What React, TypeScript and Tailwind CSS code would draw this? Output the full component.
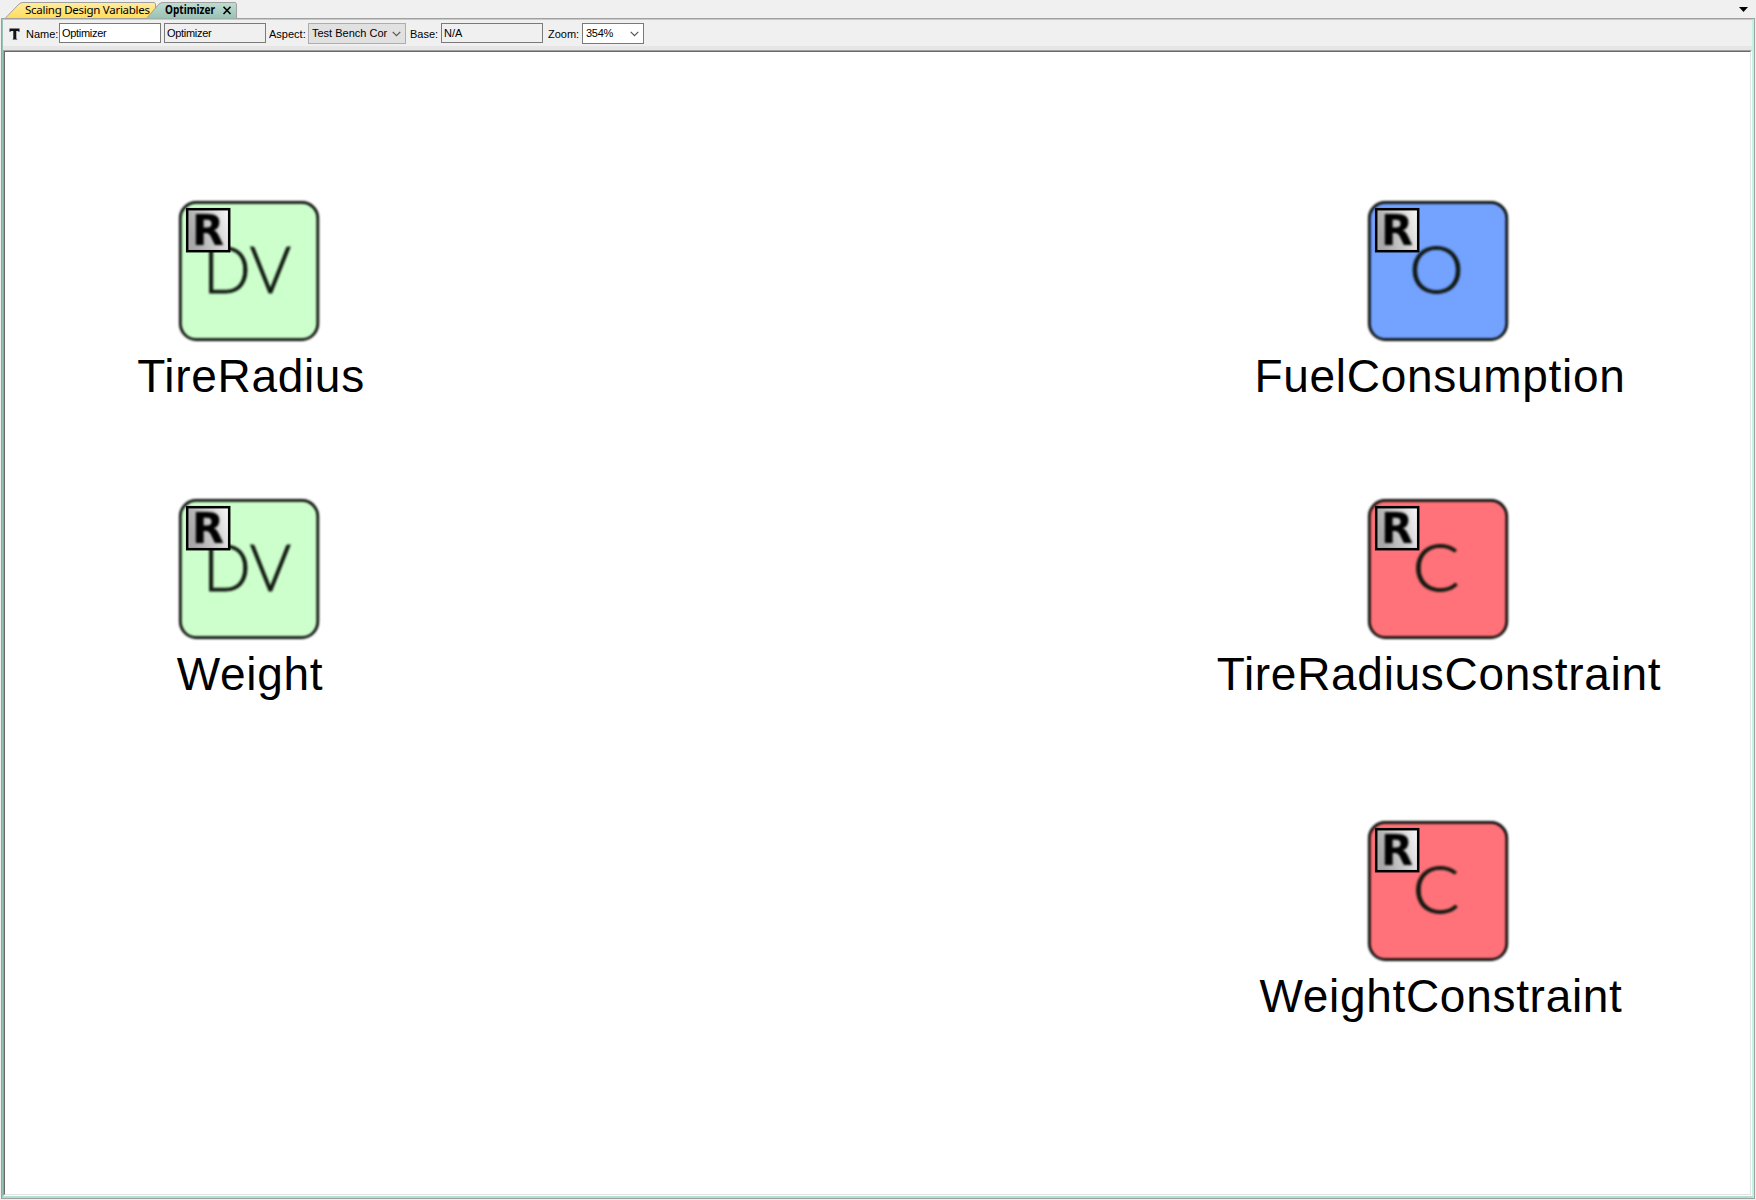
import React from "react";

type NodeProps = {
  place: string;
  glyph: string;
  fill: string;
  label: string;
  textX: number;
  textW: number;
  shift: string;
};

function DiagramNode({ place, glyph, fill, label, textX, textW, shift }: NodeProps) {
  return (
    <div className={`absolute flex w-[140px] flex-col items-center ${place}`}>
      <svg width="140" height="140" viewBox="0 0 140 140" className="shrink-0 overflow-visible">
        <defs>
          <linearGradient id="badge" x1="0" y1="0.3" x2="1" y2="0">
            <stop offset="0" stopColor="#a8a8a8" />
            <stop offset="0.5" stopColor="#cdcdcd" />
            <stop offset="1" stopColor="#fafafa" />
          </linearGradient>
        </defs>
        <g className="blur-[0.8px]">
          <rect x="1.3" y="1.3" width="137.5" height="137.3" rx="16" fill={fill} stroke="#060a06" strokeWidth="2.7" />
        </g>
        <text
          x={textX}
          y="92.3"
          textLength={textW}
          lengthAdjust="spacingAndGlyphs"
          className="font-['Lato'] font-light blur-[0.9px]"
          fontSize="65"
          fill="#101810"
          stroke="#101810"
          strokeWidth="0.9"
        >
          {glyph}
        </text>
        <rect x="8.2" y="8.2" width="42" height="42" fill="url(#badge)" stroke="#000" strokeWidth="2.5" />
        <text
          x="13"
          y="44"
          textLength="32"
          lengthAdjust="spacingAndGlyphs"
          className="font-['DejaVu_Sans'] font-bold blur-[0.8px]"
          fontSize="42"
          fill="#000"
        >
          R
        </text>
      </svg>
      <div className={`relative mt-[9px] text-[46px] leading-[52px] tracking-[0.7px] whitespace-nowrap text-black ${shift}`}>{label}</div>
    </div>
  );
}

function Chevron() {
  return (
    <svg width="9" height="6" viewBox="0 0 9 6" className="shrink-0">
      <path d="M0.7 0.8L4.5 4.6L8.3 0.8" fill="none" stroke="#555" strokeWidth="1.2" />
    </svg>
  );
}

export default function App() {
  return (
    <div className="flex h-[1200px] w-[1756px] flex-col overflow-hidden bg-[#f0f0f0] font-['Liberation_Sans',sans-serif] text-black">
      <div className="relative h-[18px] shrink-0">
        <svg width="240" height="19" viewBox="0 0 240 19" className="absolute left-0 top-0">
          <defs>
            <linearGradient id="yellow" x1="0" y1="0" x2="0" y2="1">
              <stop offset="0" stopColor="#ffeda0" />
              <stop offset="1" stopColor="#ffdc58" />
            </linearGradient>
            <linearGradient id="teal" x1="0" y1="0" x2="0" y2="1">
              <stop offset="0" stopColor="#c0dcd3" />
              <stop offset="1" stopColor="#97c1b3" />
            </linearGradient>
          </defs>
          <path d="M5 18.5L19 4Q21 2.5 23 2.5H154.5L155.5 4V18.5Z" fill="url(#yellow)" stroke="#a0a0a0" />
          <path d="M146 19L159 4Q161 2.5 163 2.5H235.5L236.5 4V19Z" fill="url(#teal)" stroke="#a0a0a0" />
          <path d="M223.5 6.7L230.5 14M230.5 6.7L223.5 14" stroke="#000" strokeWidth="1.6" />
          <text x="25" y="14" textLength="125" className="font-['Noto_Sans']" fontSize="11.5">Scaling Design Variables</text>
          <text x="165" y="14" textLength="50" lengthAdjust="spacingAndGlyphs" className="font-['Noto_Sans'] font-bold" fontSize="11.5">Optimizer</text>
        </svg>
        <svg width="9" height="5" viewBox="0 0 9 5" className="absolute right-[8px] top-[7px]">
          <path d="M0 0H9L4.5 5Z" fill="#000" />
        </svg>
      </div>
      <div className="mx-px mb-px flex min-h-0 flex-1 flex-col border border-[#a0a0a0]">
        <div className="flex min-h-0 flex-1 flex-col border-t border-r-2 border-b-2 border-l border-t-[#b4d4cb] border-r-[#c0f5e2] border-b-[#b4e0d2] border-l-[#97c1b3]">
          <div className="flex h-[30px] shrink-0 items-start border-b-4 border-[#e6e6e6] pt-[3px] text-[11px]">
            <svg width="11" height="12" viewBox="0 0 11 12" className="ml-[6px] mt-[5px]">
              <path d="M0.5 0.5H10.5V4L8.5 3H7.3V10.5L8.5 11.5H3.5L4.3 10.5V3H2.5L0.5 4Z" fill="#101418" />
            </svg>
            <span className="mt-[3px] ml-[6px] w-[33px]">Name:</span>
            <div className="h-5 w-[102px] border border-[#7a7a7a] bg-white pl-[2px] leading-[18px] tracking-[-0.3px]">Optimizer</div>
            <div className="ml-[3px] h-5 w-[102px] border border-[#7a7a7a] bg-[#f0f0f0] pl-[2px] leading-[18px] tracking-[-0.3px]">Optimizer</div>
            <span className="mt-[3px] ml-[3px] w-[39px]">Aspect:</span>
            <div className="flex h-[21px] w-[98px] items-center justify-between border border-[#adadad] bg-[#e1e1e1] pr-1 pl-[3px]">
              <span className="w-[77px] overflow-hidden whitespace-nowrap">Test Bench Cor</span>
              <Chevron />
            </div>
            <span className="mt-[3px] ml-1 w-[31px]">Base:</span>
            <div className="h-5 w-[102px] border border-[#7a7a7a] bg-[#f0f0f0] pl-[2px] leading-[18px]">N/A</div>
            <span className="mt-[3px] ml-[5px] w-[34px]">Zoom:</span>
            <div className="flex h-[21px] w-[62px] items-center justify-between border border-[#7a7a7a] bg-white pr-1 pl-[3px]">
              <span className="tracking-[-0.3px]">354%</span>
              <Chevron />
            </div>
          </div>
          <div className="flex min-h-0 flex-1 flex-col border-t border-r border-b border-l border-t-[#a0a0a0] border-r-white border-b-white border-l-[#a0a0a0]">
            <div className="relative min-h-0 flex-1 border border-t-[#696969] border-r-[#e3e3e3] border-b-[#e3e3e3] border-l-[#696969] bg-white">
              <DiagramNode place="left-[174px] top-[149px]" glyph="DV" fill="#ccffcc" label="TireRadius" textX={24} textW={88} shift="left-[2px]" />
              <DiagramNode place="left-[174px] top-[447px]" glyph="DV" fill="#ccffcc" label="Weight" textX={24} textW={88} shift="left-[1px]" />
              <DiagramNode place="left-[1363px] top-[149px]" glyph="O" fill="#73a2ff" label="FuelConsumption" textX={41} textW={55} shift="left-[2px]" />
              <DiagramNode place="left-[1363px] top-[447px]" glyph="C" fill="#ff7279" label="TireRadiusConstraint" textX={44.5} textW={47} shift="left-[1px]" />
              <DiagramNode place="left-[1363px] top-[769px]" glyph="C" fill="#ff7279" label="WeightConstraint" textX={44.5} textW={47} shift="left-[3px]" />
            </div>
          </div>
        </div>
      </div>
    </div>
  );
}
